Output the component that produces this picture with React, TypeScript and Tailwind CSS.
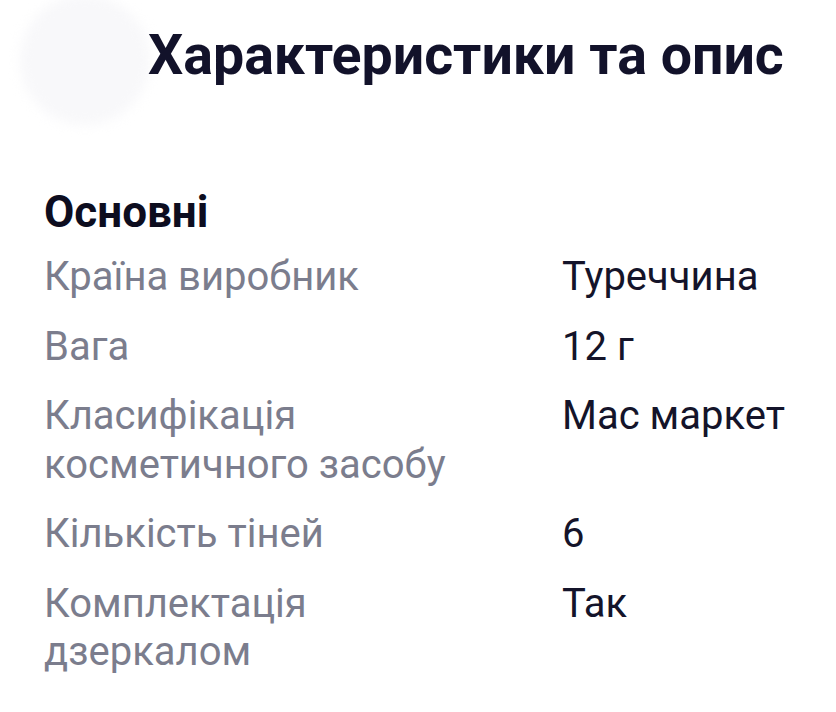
import React from "react";

const rows: { label: string[]; value: string }[] = [
  { label: ["Країна виробник"], value: "Туреччина" },
  { label: ["Вага"], value: "12 г" },
  { label: ["Класифікація", "косметичного засобу"], value: "Mac маркет" },
  { label: ["Кількість тіней"], value: "6" },
  { label: ["Комплектація", "дзеркалом"], value: "Так" },
];

export default function App() {
  return (
    <div
      className="relative w-[836px] h-[712px] bg-white overflow-hidden"
      style={{ fontFamily: "Roboto, 'Noto Sans', sans-serif" }}
    >
      <div className="absolute left-[20px] top-[-5px] w-[130px] h-[130px] rounded-full bg-[#f8f8fa] blur-[6px]" />
      <div className="relative pl-[148px] pt-[24px]">
        <h1 className="text-[55.5px] leading-[64px] font-bold text-[#12122a]">
          Характеристики та опис
        </h1>
      </div>
      <div className="relative pl-[44px] pt-[100px]">
        <h2 className="text-[44px] leading-[48px] font-bold text-[#0d0d1f]">Основні</h2>
        <div className="mt-[17px] flex flex-col gap-[21px]">
          {rows.map((r) => (
            <div key={r.value} className="flex text-[40px] leading-[48.5px]">
              <div className="w-[518px] text-[#7b7d8d]">
                {r.label.map((l) => (
                  <div key={l}>{l}</div>
                ))}
              </div>
              <div className="text-[#14142a]">{r.value}</div>
            </div>
          ))}
        </div>
      </div>
    </div>
  );
}
